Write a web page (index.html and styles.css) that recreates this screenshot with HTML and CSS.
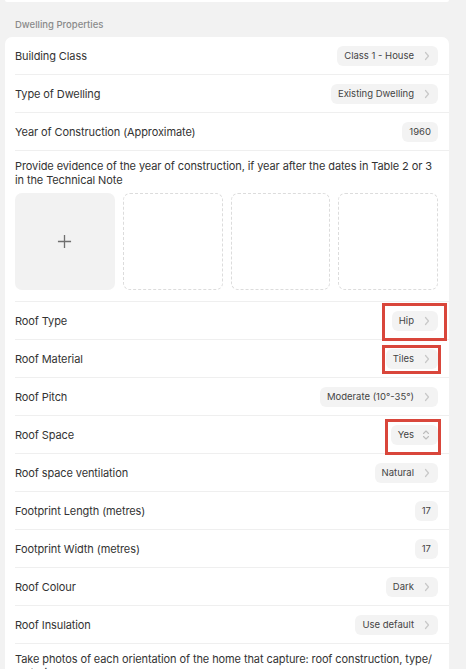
FILE: index.html
```html
<!DOCTYPE html>
<html>
<head>
<meta charset="utf-8">
<link rel="stylesheet" href="styles.css">
</head>
<body>
<div class="prev-card"></div>
<div class="section-title">Dwelling Properties</div>
<div class="card">
  <div class="row"><span class="label">Building Class</span><span class="pill">Class 1 - House<svg class="chev" viewBox="0 0 6 10"><path d="M1.5 1.5 L4.5 5 L1.5 8.5"/></svg></span></div>
  <div class="row"><span class="label">Type of Dwelling</span><span class="pill">Existing Dwelling<svg class="chev" viewBox="0 0 6 10"><path d="M1.5 1.5 L4.5 5 L1.5 8.5"/></svg></span></div>
  <div class="row"><span class="label">Year of Construction (Approximate)</span><span class="pill num">1960</span></div>
  <div class="evidence">
    <div class="evidence-text">Provide evidence of the year of construction, if year after the dates in Table 2 or 3 in the Technical Note</div>
    <div class="tiles">
      <div class="tile add"><svg viewBox="0 0 16 16" class="plus"><path d="M8 1 V15 M1 8 H15"/></svg></div>
      <div class="tile empty"></div>
      <div class="tile empty"></div>
      <div class="tile empty"></div>
    </div>
  </div>
  <div class="row"><span class="label">Roof Type</span><span class="pill">Hip<svg class="chev" viewBox="0 0 6 10"><path d="M1.5 1.5 L4.5 5 L1.5 8.5"/></svg><span class="mark mark-hip"></span></span></div>
  <div class="row"><span class="label">Roof Material</span><span class="pill">Tiles<svg class="chev" viewBox="0 0 6 10"><path d="M1.5 1.5 L4.5 5 L1.5 8.5"/></svg><span class="mark mark-tiles"></span></span></div>
  <div class="row"><span class="label">Roof Pitch</span><span class="pill">Moderate (10°-35°)<svg class="chev" viewBox="0 0 6 10"><path d="M1.5 1.5 L4.5 5 L1.5 8.5"/></svg></span></div>
  <div class="row"><span class="label">Roof Space</span><span class="pill">Yes<svg class="updown" viewBox="0 0 8 12"><path d="M1.5 4.5 L4 2 L6.5 4.5 M1.5 7.5 L4 10 L6.5 7.5"/></svg><span class="mark mark-yes"></span></span></div>
  <div class="row"><span class="label">Roof space ventilation</span><span class="pill">Natural<svg class="chev" viewBox="0 0 6 10"><path d="M1.5 1.5 L4.5 5 L1.5 8.5"/></svg></span></div>
  <div class="row"><span class="label">Footprint Length (metres)</span><span class="pill num">17</span></div>
  <div class="row"><span class="label">Footprint Width (metres)</span><span class="pill num">17</span></div>
  <div class="row"><span class="label">Roof Colour</span><span class="pill">Dark<svg class="chev" viewBox="0 0 6 10"><path d="M1.5 1.5 L4.5 5 L1.5 8.5"/></svg></span></div>
  <div class="row"><span class="label">Roof Insulation</span><span class="pill">Use default<svg class="chev" viewBox="0 0 6 10"><path d="M1.5 1.5 L4.5 5 L1.5 8.5"/></svg></span></div>
  <div class="evidence last">
    <div class="evidence-text">Take photos of each orientation of the home that capture: roof construction, type/ material and colour</div>
  </div>
</div>
</body>
</html>
```

FILE: styles.css
```css
html, body {
  margin: 0;
  padding: 0;
  background: #f2f2f2;
  height: 669px;
  overflow: hidden;
}
body {
  font-family: Inter, "Noto Sans", sans-serif;
  color: #333;
}
.prev-card {
  margin: 0 17px 0 5px;
  height: 2px;
  background: #fff;
  border-radius: 0 0 6px 6px;
}
.section-title {
  font-size: 9.5px;
  font-weight: 500;
  color: #8a8a8a;
  padding: 17px 0 0 15px;
  line-height: 12px;
  height: 18px;
}
.card {
  margin: 0 17px 0 5px;
  background: #fff;
  border-radius: 7px;
  padding-left: 10px;
}
.row {
  display: flex;
  align-items: center;
  justify-content: space-between;
  height: 37px;
  border-bottom: 1px solid #efefef;
  padding-right: 11px;
}
.label {
  font-size: 11px;
  letter-spacing: -0.1px;
  color: #333;
}
.pill {
  position: relative;
  display: inline-flex;
  align-items: center;
  height: 20px;
  padding: 0 8px 0 7px;
  background: #f3f3f3;
  border-radius: 6px;
  font-size: 9.5px;
  color: #444;
}
.pill.num {
  padding: 0 7px;
}
.chev {
  width: 6px;
  height: 10px;
  margin-left: 10px;
  fill: none;
  stroke: #c8c8c8;
  stroke-width: 1.2;
  stroke-linecap: round;
  stroke-linejoin: round;
}
.updown {
  width: 8px;
  height: 12px;
  margin-left: 8px;
  fill: none;
  stroke: #bdbdbd;
  stroke-width: 1.1;
  stroke-linecap: round;
  stroke-linejoin: round;
}
.evidence {
  border-bottom: 1px solid #efefef;
  padding: 8px 11px 11px 0;
}
.evidence.last {
  border-bottom: none;
  padding-bottom: 20px;
}
.evidence-text {
  font-size: 11px;
  line-height: 14px;
  letter-spacing: -0.1px;
  color: #333;
}
.tiles {
  display: grid;
  grid-template-columns: repeat(4, 1fr);
  gap: 8px;
  margin-top: 6px;
}
.tile {
  height: 97px;
  border-radius: 7px;
  box-sizing: border-box;
}
.tile.add {
  background: #f2f2f2;
  display: flex;
  align-items: center;
  justify-content: center;
}
.plus {
  width: 15px;
  height: 15px;
  fill: none;
  stroke: #6f6f6f;
  stroke-width: 1.4;
}
.tile.empty {
  border: 1.5px dashed #dcdcdc;
}
.mark {
  position: absolute;
  border: 3px solid #d9463b;
  box-sizing: border-box;
}
.mark-hip {
  left: -10px;
  right: -9px;
  top: -8px;
  bottom: -10px;
}
.mark-tiles {
  left: -4px;
  right: -3px;
  top: -4px;
  bottom: -5px;
}
.mark-yes {
  left: -6px;
  right: -3px;
  top: -6px;
  bottom: -10px;
}
```
